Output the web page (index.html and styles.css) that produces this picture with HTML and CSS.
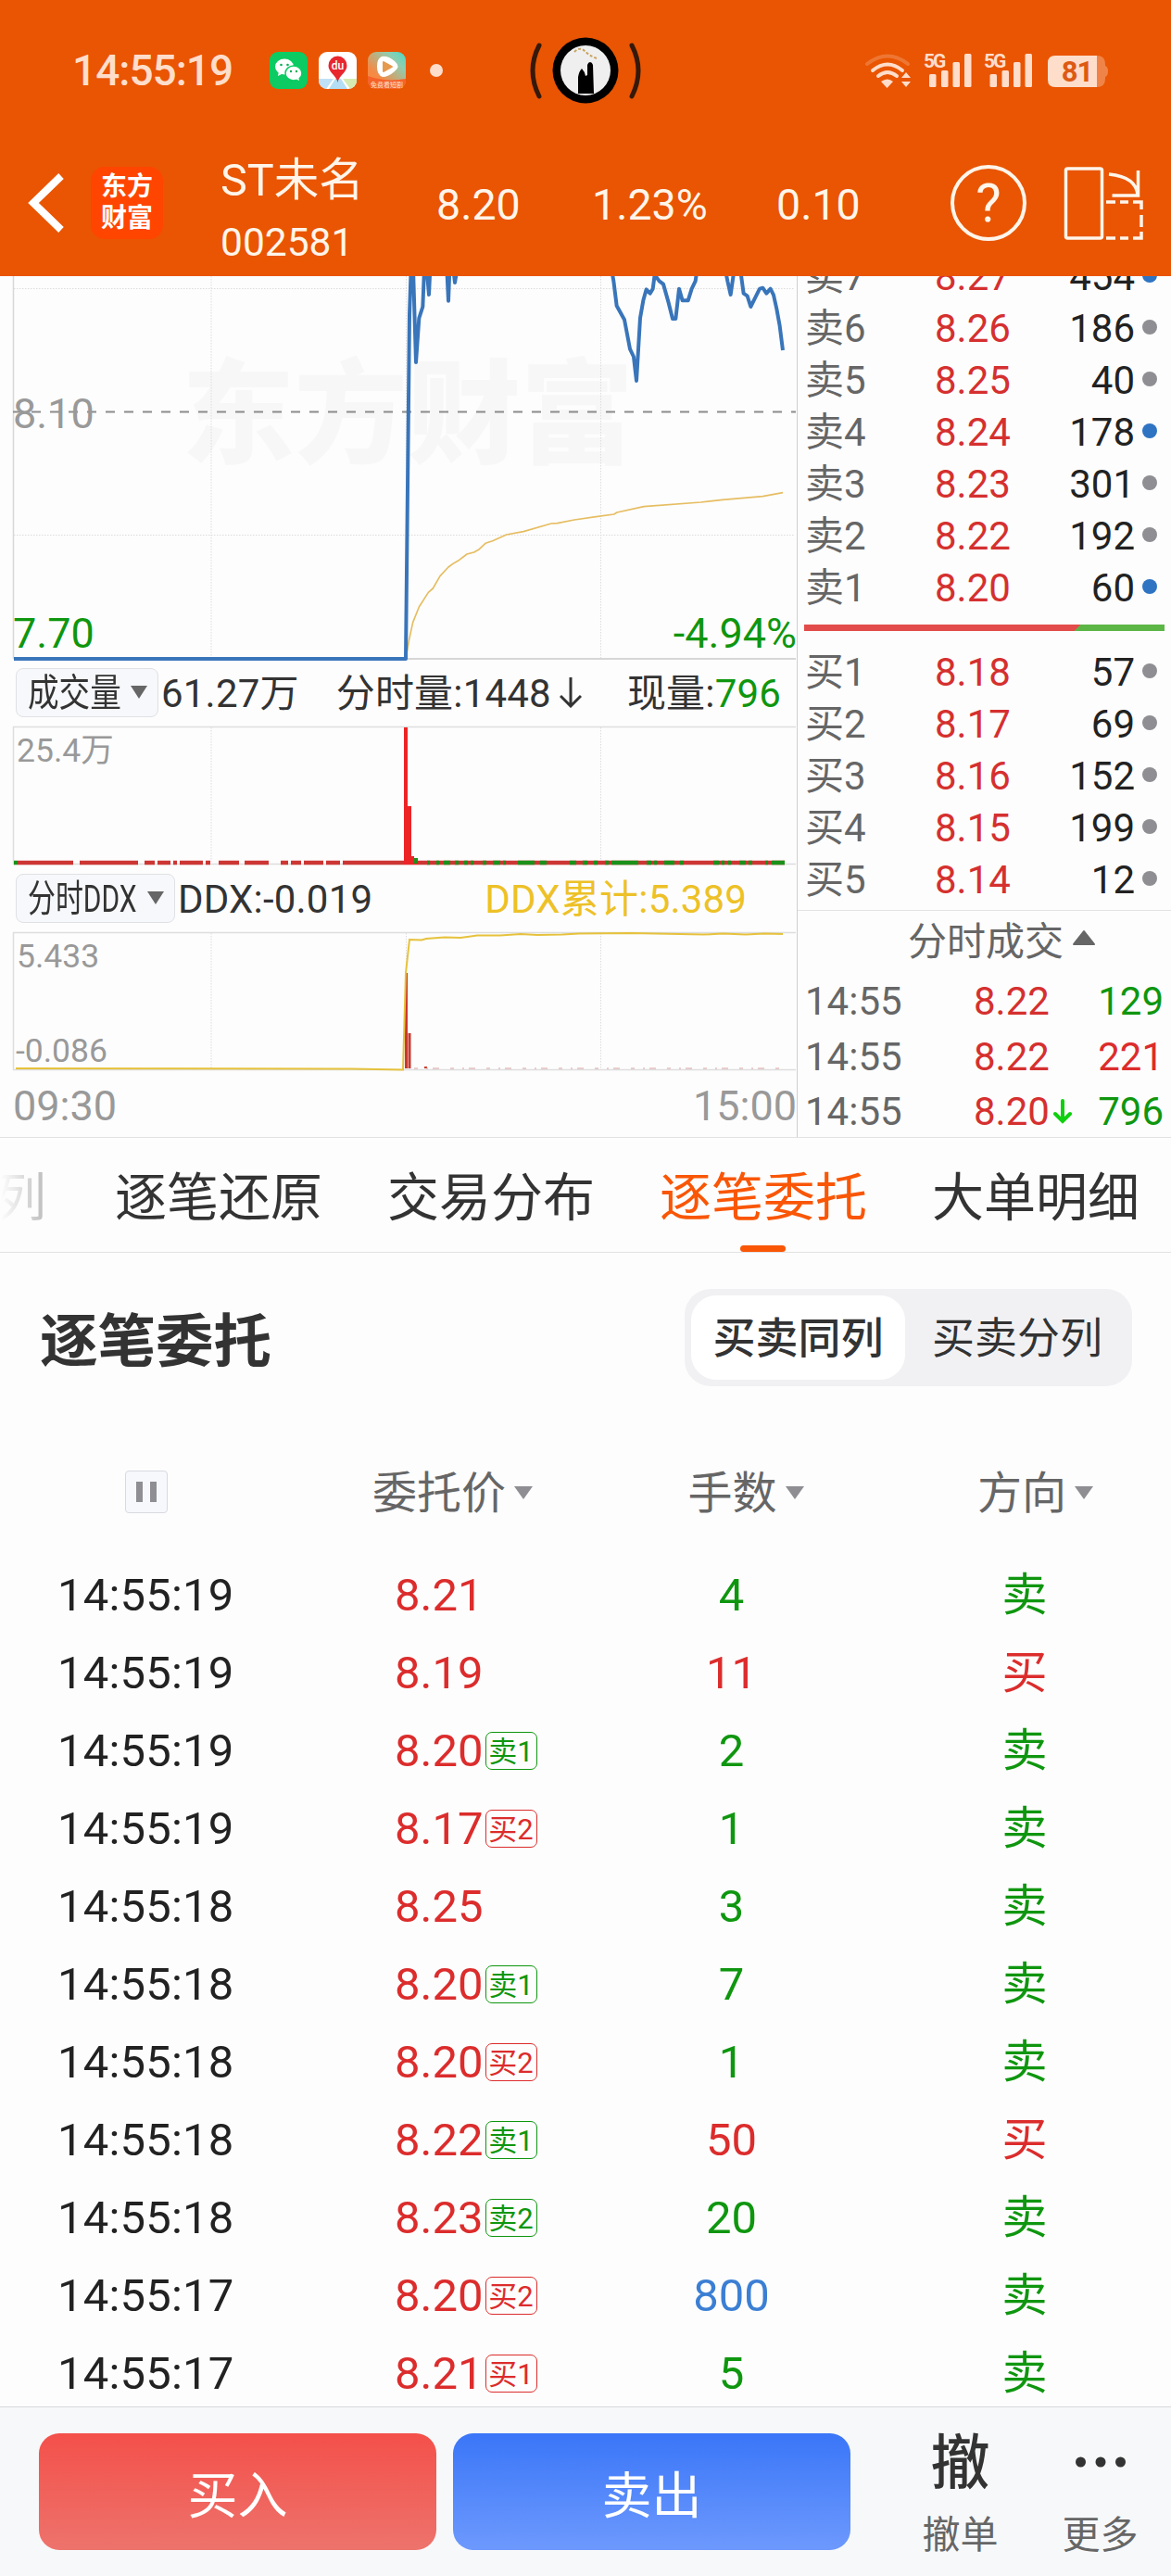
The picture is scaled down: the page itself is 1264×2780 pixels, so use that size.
FILE: index.html
```html
<!DOCTYPE html>
<html lang="zh-CN">
<head>
    <meta charset="UTF-8">
    <meta name="viewport" content="width=device-width, initial-scale=1.0">
    <title>ST未名 002581</title>
    <link rel="stylesheet" href="styles.css">
</head>
<body>
    <header class="top">
        <div class="status">
            <span class="clock">14:55:19</span>
            <svg class="apps" width="190" height="42" viewBox="290 55 190 42">
                <defs>
                    <linearGradient id="video" x1="0" y1="1" x2="1" y2="0">
                        <stop offset="0.3" stop-color="#f58a45"/>
                        <stop offset="0.75" stop-color="#8fcdb0"/>
                        <stop offset="1" stop-color="#45dcc5"/>
                    </linearGradient>
                    <clipPath id="mapClip"><rect x="344" y="56" width="41" height="40" rx="9"/></clipPath>
                    <clipPath id="videoClip"><rect x="397" y="56" width="41" height="40" rx="9"/></clipPath>
                </defs>
                <rect x="291" y="56" width="41" height="40" rx="9" fill="#0bcb62"/>
                <path d="M301 77l-1 5 6-3z" fill="#fff"/>
                <ellipse cx="307" cy="72" rx="10" ry="8.500" fill="#fff"/>
                <ellipse cx="317" cy="79" rx="9" ry="8" fill="#fff" stroke="#0bcb62" stroke-width="1.500"/>
                <path d="M319 85l4 2-1-5z" fill="#fff"/>
                <g fill="#0bae55"><circle cx="303.500" cy="70" r="1.300"/><circle cx="310.500" cy="70" r="1.300"/><circle cx="314" cy="77" r="1.200"/><circle cx="320" cy="77" r="1.200"/></g>
                <g clip-path="url(#mapClip)">
                    <rect x="344" y="56" width="41" height="40" fill="#fff"/>
                    <path d="M344 85h16l-8 11h-8z" fill="#bfe0f7"/>
                    <path d="M362 85h6l7 11h-20z" fill="#b4def5"/>
                    <path d="M370 85h15v11h-7z" fill="#d5ebb2"/>
                </g>
                <path d="M364.500 89c-1-7-10-11-10-18a10 10.500 0 0 1 20 0c0 7-9 11-10 18z" fill="#e8272f"/>
                <text x="364.500" y="75" class="du">du</text>
                <g clip-path="url(#videoClip)">
                    <rect x="397" y="56" width="41" height="40" fill="url(#video)"/>
                    <path d="M397 82q20 7 41 3v12h-41z" fill="#f5622a"/>
                </g>
                <path d="M412 61q-5 2-5 11t6 11q6 0 13-6 7-5 0-11-7-6-14-5z" fill="#fff"/>
                <path d="M414 67v10l9-5z" fill="#e59a4e" stroke="#e59a4e" stroke-width="2" stroke-linejoin="round"/>
                <text x="417.500" y="94" class="app-label">免费看短剧</text>
                <circle cx="471" cy="76" r="7" fill="#ffddcb"/>
            </svg>
            <svg class="island" width="124" height="74" viewBox="570 39 124 74">
                <path d="M582 49q-14 27 0 55M682 49q14 27 0 55" fill="none" stroke="#35190a" stroke-width="5" stroke-linecap="round"/>
                <circle cx="632" cy="76" r="35.500" fill="#000"/>
                <circle cx="632" cy="76" r="27" fill="#efefef"/>
                <path d="M620 56q6-6 11-1t13 8" fill="none" stroke="#c9a25c" stroke-width="2" stroke-dasharray="3 2"/>
                <path d="M624 101v-18q1-6 4-9 3 3 4 8l2-1v-11q1-3 3-3t3 3l1 31z" fill="#000"/>
            </svg>
            <svg class="signals" width="266" height="42" viewBox="932 55 266 42">
                <g fill="none" stroke="#ffddcb" stroke-width="5" stroke-linecap="round">
                    <path d="M936 69q22-17 44 0" opacity="0.25" stroke-width="4"/>
                    <path d="M942 76q16-13 32 0M948 82q10-8 20 0" stroke-width="4"/>
                </g>
                <path d="M951 88q7-5 13 0l-6.500 7z" fill="#ffddcb"/>
                <path d="M973 84l5-6 5 6zM973 88l5 6 5-6z" fill="#ffddcb"/>
                <g fill="#ffddcb">
                    <text x="997" y="73" class="net">5G</text>
                    <rect x="1003" y="80" width="7.500" height="14" rx="1.500"/>
                    <rect x="1016" y="76" width="7.500" height="18" rx="1.500"/>
                    <rect x="1028.500" y="67" width="7.500" height="27" rx="1.500"/>
                    <rect x="1041" y="58" width="7.500" height="36" rx="1.500"/>
                    <text x="1062" y="73" class="net">5G</text>
                    <rect x="1068.500" y="80" width="7.500" height="14" rx="1.500"/>
                    <rect x="1081.500" y="76" width="7.500" height="18" rx="1.500"/>
                    <rect x="1094" y="67" width="7.500" height="27" rx="1.500"/>
                    <rect x="1106.500" y="58" width="7.500" height="36" rx="1.500"/>
                    <path d="M1139 60h45v34h-45q-8 0-8-8v-18q0-8 8-8z"/>
                    <path d="M1184 60q9 0 9 9v2q3 1 3 6t-3 6v2q0 9-9 9z" opacity="0.35"/>
                </g>
                <text x="1162.500" y="88" class="battery">81</text>
            </svg>
        </div>
        <div class="nav">
            <svg class="back" width="44" height="70" viewBox="0 0 44 70"><path d="M38 6L8 35l30 29" fill="none" stroke="#fff" stroke-width="8"/></svg>
            <div class="logo"><span>东方</span><span>财富</span></div>
            <div class="stock">
                <span class="stock-name">ST未名</span>
                <span class="stock-code">002581</span>
            </div>
            <span class="quote q-price">8.20</span>
            <span class="quote q-rate">1.23%</span>
            <span class="quote q-diff">0.10</span>
            <div class="help">?</div>
            <svg class="rotate" width="88" height="82" viewBox="1148 177 88 82" fill="none" stroke="#fff5ea" stroke-width="3.500">
                <rect x="1151.500" y="181" width="39" height="75" rx="2"/>
                <path d="M1198 187q30 3 31 23M1229.500 183v27h-28"/>
                <path d="M1195 217h10m5 0h9m5 0h9v8m0 6v13m0 5v7h-9m-5 0h-9m-5 0h-10"/>
            </svg>
        </div>
    </header>

    <section class="market">
        <div class="charts">
            <svg class="chart" width="860" height="417" viewBox="0 298 860 417">
                <text x="196" y="490" class="watermark">东方财富</text>
                <g class="grid">
                    <path d="M15 311.500H858M15 577.500H858M228 298V710M438.500 298V710M648.500 298V710"/>
                </g>
                <path d="M14.500 298V711" stroke="#d8d8d8" stroke-width="1.500"/>
                <path d="M438 711H859" stroke="#d6d6d6" stroke-width="2"/>
                <path d="M14 444.500H859" stroke="#8c8c8c" stroke-width="2" stroke-dasharray="10 10"/>
                <text x="14" y="462" class="axis">8.10</text>
                <text x="14" y="699" class="axis down">7.70</text>
                <text x="860" y="699" class="axis down end">-4.94%</text>
                <!-- average price and price, drawn on a 3x scale -->
                <g transform="translate(430 290) scale(0.33333)" fill="none" stroke-linejoin="round">
                    <path stroke="#e6bd62" stroke-width="5" d="M28 1240L35 1200 47 1145 67 1095 97 1048 112 1035 135 995 162 966 180 953 193 946 222 924 245 918 262 908 282 889 305 881 350 861 405 851 495 825 515 824 570 813 640 803 698 795 708 789 795 770 980 756 1050 748 1180 737 1245 725"/>
                    <g stroke="#3975ba" stroke-width="12">
                        <path d="M-1245 1263H24L36 150 41 0H48L57 303 67 160 79 123 84 0H92L99 84 103 0M157 0L162 104 166 0M178 0L183 45 189 10"/>
                        <path d="M690 0L697 40 707 120 732 165 750 260 762 285 771 363 783 160 793 103 803 67 815 80 824 65 830 20 845 40 858 50 875 110 888 162 898 162 909 65 920 103 938 103 950 65 962 40 968 0M1058 0L1066 40 1076 84 1088 0M1107 0L1118 80 1130 88 1141 123 1155 95 1170 65 1180 62 1192 80 1205 65 1215 85 1225 130 1235 185 1245 264"/>
                    </g>
                </g>
            </svg>

            <div class="info">
                <button class="picker"><span class="picker-text vol">成交量</span><i class="caret"></i></button>
                <span class="total">61.27万</span>
                <span class="minute">分时量:1448</span>
                <svg class="arrow" width="24" height="34" viewBox="0 0 24 34"><path d="M12 1v30M1 21l11 11 11-11" fill="none" stroke="#333" stroke-width="3"/></svg>
                <span class="now">现量:<b>796</b></span>
            </div>

            <svg class="chart" width="860" height="158" viewBox="0 779 860 158">
                <path class="frame" d="M859 784.500H14.500V932.500H859"/>
                <path class="grid" d="M228 785V932M648.500 785V932"/>
                <text x="18" y="822" class="mark">25.4万</text>
                <g fill="none" stroke-width="4.500">
                    <path stroke="#cc3634" d="M19 931H79M86 931H149M156 931H167M170 931H184M187 931H191M194 931H219M222 931H227M236 931H258M264 931H290M303 931H311M314 931H325M328 931H349M352 931H367M370 931H847"/>
                    <path stroke="#1b9119" d="M15 931H19M461 931H464M471 931H474M479 931H486M491 931H495M501 931H505M508 931H511M521 931H525M532 931H540M543 931H546M559 931H577M583 931H590M615 931H622M629 931H634M641 931H645M653 931H657M660 931H689M698 931H703M706 931H709M717 931H728M734 931H738M770 931H776M779 931H782M786 931H789M798 931H805M808 931H812M826 931H829M833 931H847"/>
                </g>
                <path d="M436 785h4v85h4v54h3v6h5v3h-16z" fill="#ec2426"/>
                <path d="M447 926h4v6h-4z" fill="#1b9119"/>
            </svg>

            <div class="info">
                <button class="picker"><span class="picker-text ddx">分时DDX</span><i class="caret"></i></button>
                <span class="total">DDX:-0.019</span>
                <span class="sum">DDX累计:5.389</span>
            </div>

            <svg class="chart" width="860" height="159" viewBox="0 1001 860 159">
                <path class="frame" d="M859 1006.500H14.500V1154.500H859"/>
                <path class="grid" d="M228 1007V1154M438.500 1007V1154M648.500 1007V1154"/>
                <text x="18" y="1044" class="mark">5.433</text>
                <text x="17" y="1146" class="mark">-0.086</text>
                <path d="M437 1050h3v103h-3zM440.500 1115h3v38h-3zM458 1151h3v2h-3z" fill="#c93a30"/>
                <path d="M447 1153H846" stroke="#d9a0a0" stroke-dasharray="4 9 2 5 7 12"/>
                <path d="M17 1153L380 1153.500 435 1154.500 438 1050 442 1014 455 1014.500 460 1013 480 1011.500 497 1012 515 1009.500 540 1009.500 562 1008 580 1009 607 1008.500 625 1007.500 680 1007 760 1008.500 780 1007.500 805 1008.500 825 1007.500 845 1008" fill="none" stroke="#e6c23c" stroke-width="2"/>
            </svg>

            <div class="times"><span>09:30</span><span>15:00</span></div>
        </div>

        <div class="book">
            <div class="level"><span>卖7</span><em>8.27</em><span class="qty">454</span><i class="dot blue"></i></div>
            <div class="level"><span>卖6</span><em>8.26</em><span class="qty">186</span><i class="dot"></i></div>
            <div class="level"><span>卖5</span><em>8.25</em><span class="qty">40</span><i class="dot"></i></div>
            <div class="level"><span>卖4</span><em>8.24</em><span class="qty">178</span><i class="dot blue"></i></div>
            <div class="level"><span>卖3</span><em>8.23</em><span class="qty">301</span><i class="dot"></i></div>
            <div class="level"><span>卖2</span><em>8.22</em><span class="qty">192</span><i class="dot"></i></div>
            <div class="level"><span>卖1</span><em>8.20</em><span class="qty">60</span><i class="dot blue"></i></div>
            <div class="ratio"></div>
            <div class="level"><span>买1</span><em>8.18</em><span class="qty">57</span><i class="dot"></i></div>
            <div class="level"><span>买2</span><em>8.17</em><span class="qty">69</span><i class="dot"></i></div>
            <div class="level"><span>买3</span><em>8.16</em><span class="qty">152</span><i class="dot"></i></div>
            <div class="level"><span>买4</span><em>8.15</em><span class="qty">199</span><i class="dot"></i></div>
            <div class="level"><span>买5</span><em>8.14</em><span class="qty">12</span><i class="dot"></i></div>
            <div class="ticks-title">分时成交<svg width="26" height="18" viewBox="0 0 26 18"><path d="M13 2L24 16H2z" fill="#666" stroke="#666" stroke-width="2" stroke-linejoin="round"/></svg></div>
            <div class="tick"><span>14:55</span><em>8.22</em><span class="down">129</span></div>
            <div class="tick"><span>14:55</span><em>8.22</em><span class="up">221</span></div>
            <div class="tick"><span>14:55</span><em>8.20<svg width="20" height="28" viewBox="0 0 20 28"><path d="M10 2v22M2 16l8 8 8-8" fill="none" stroke="#0fd00f" stroke-width="4" stroke-linecap="round"/></svg></em><span class="down">796</span></div>
        </div>
    </section>

    <nav class="tabs">
        <span class="tab cut">列</span>
        <span class="tab">逐笔还原</span>
        <span class="tab">交易分布</span>
        <span class="tab active">逐笔委托</span>
        <span class="tab">大单明细</span>
    </nav>

    <section class="orders">
        <div class="orders-head">
            <h1>逐笔委托</h1>
            <div class="switch">
                <span class="on">买卖同列</span>
                <span>买卖分列</span>
            </div>
        </div>
        <div class="row head">
            <span class="c1"><i class="pause"></i></span>
            <span class="c2">委托价<i class="sort"></i></span>
            <span class="c3">手数<i class="sort"></i></span>
            <span class="c4">方向<i class="sort"></i></span>
        </div>
        <div class="row"><span class="c1">14:55:19</span><span class="c2">8.21</span><span class="c3 down">4</span><span class="c4 down">卖</span></div>
        <div class="row"><span class="c1">14:55:19</span><span class="c2">8.19</span><span class="c3 up">11</span><span class="c4 up">买</span></div>
        <div class="row"><span class="c1">14:55:19</span><span class="c2">8.20<i class="chip down">卖1</i></span><span class="c3 down">2</span><span class="c4 down">卖</span></div>
        <div class="row"><span class="c1">14:55:19</span><span class="c2">8.17<i class="chip up">买2</i></span><span class="c3 down">1</span><span class="c4 down">卖</span></div>
        <div class="row"><span class="c1">14:55:18</span><span class="c2">8.25</span><span class="c3 down">3</span><span class="c4 down">卖</span></div>
        <div class="row"><span class="c1">14:55:18</span><span class="c2">8.20<i class="chip down">卖1</i></span><span class="c3 down">7</span><span class="c4 down">卖</span></div>
        <div class="row"><span class="c1">14:55:18</span><span class="c2">8.20<i class="chip up">买2</i></span><span class="c3 down">1</span><span class="c4 down">卖</span></div>
        <div class="row"><span class="c1">14:55:18</span><span class="c2">8.22<i class="chip down">卖1</i></span><span class="c3 up">50</span><span class="c4 up">买</span></div>
        <div class="row"><span class="c1">14:55:18</span><span class="c2">8.23<i class="chip down">卖2</i></span><span class="c3 down">20</span><span class="c4 down">卖</span></div>
        <div class="row"><span class="c1">14:55:17</span><span class="c2">8.20<i class="chip up">买2</i></span><span class="c3 big">800</span><span class="c4 down">卖</span></div>
        <div class="row"><span class="c1">14:55:17</span><span class="c2">8.21<i class="chip up">买1</i></span><span class="c3 down">5</span><span class="c4 down">卖</span></div>
    </section>

    <footer class="trade">
        <button class="buy">买入</button>
        <button class="sell">卖出</button>
        <div class="tool"><span class="tool-icon">撤</span><span>撤单</span></div>
        <div class="tool"><span class="tool-icon"><svg width="56" height="12" viewBox="0 0 56 12" fill="#333"><circle cx="6.500" cy="6" r="5.500"/><circle cx="28" cy="6" r="5.500"/><circle cx="49.500" cy="6" r="5.500"/></svg></span><span>更多</span></div>
    </footer>
</body>
</html>
```
FILE: styles.css
```css
* {
    box-sizing: border-box;
}
body {
    margin: 0;
    width: 1264px;
    height: 2780px;
    overflow: hidden;
    display: flex;
    flex-direction: column;
    background: #fdfdfd;
    color: #333;
    font-family: Roboto, "Noto Sans CJK SC", sans-serif;
}
svg {
    display: block;
    flex: none;
}
em, i {
    font-style: normal;
}
button {
    border: none;
    font-family: inherit;
}
.up {
    color: #dc2c2c;
}
.down {
    color: #0f960f;
}
.big {
    color: #3b7fd4;
}

/* header */
.top {
    height: 298px;
    flex: none;
    background: #e95502;
    color: #fff5ea;
}
.status {
    height: 152px;
    display: flex;
    align-items: center;
    padding-left: 78px;
}
.clock {
    width: 212px;
    font-size: 46px;
    font-weight: 500;
    line-height: 50px;
    color: #ffddcb;
    letter-spacing: -1px;
}
.island {
    margin-left: 90px;
}
.signals {
    margin-left: 238px;
}
.du {
    font-size: 12px;
    font-weight: 500;
    fill: #fff;
    text-anchor: middle;
}
.app-label {
    font-size: 7px;
    fill: #ffe3cf;
    text-anchor: middle;
}
.net {
    font-size: 21px;
    font-weight: 700;
    letter-spacing: -2px;
}
.battery {
    font-size: 31px;
    font-weight: 700;
    fill: #dc5a14;
    text-anchor: middle;
    letter-spacing: -1px;
}
.nav {
    height: 134px;
    display: flex;
    align-items: center;
    padding-left: 28px;
}
.logo {
    width: 78px;
    height: 78px;
    margin-left: 26px;
    padding-top: 5px;
    border-radius: 15px;
    background: #ff4500;
    color: #fff;
    font-size: 28px;
    font-weight: 700;
    line-height: 34px;
    text-align: center;
}
.logo span {
    display: block;
}
.stock {
    width: 233px;
    margin-left: 62px;
    padding-top: 15px;
}
.stock span {
    display: block;
}
.stock-name {
    font-size: 48.500px;
    line-height: 70px;
}
.stock-code {
    font-size: 42.500px;
    line-height: 64px;
}
.quote {
    padding-top: 4px;
    font-size: 46.500px;
}
.q-price {
    width: 168px;
}
.q-rate {
    width: 199px;
}
.q-diff {
    width: 188px;
}
.help {
    width: 82px;
    height: 82px;
    border: 4px solid #fff5ea;
    border-radius: 50%;
    font-size: 58px;
    line-height: 75px;
    text-align: center;
}
.rotate {
    margin-left: 39px;
}

/* charts */
.market {
    height: 930px;
    flex: none;
    display: flex;
    border-bottom: 1px solid #e2e2e2;
    overflow: hidden;
}
.charts {
    width: 860px;
}
.grid {
    fill: none;
    stroke: #dcdcdc;
    stroke-dasharray: 1.500 1.500;
}
.frame {
    fill: none;
    stroke: #dedede;
    stroke-width: 1.500;
}
.watermark {
    font-size: 122px;
    font-weight: 900;
    fill: #f7f7f7;
}
.axis {
    font-size: 45px;
    fill: #999;
}
.axis.down {
    fill: #0f960f;
}
.end {
    text-anchor: end;
}
.mark {
    font-size: 35.500px;
    fill: #999;
}
.info {
    height: 64px;
    display: flex;
    align-items: center;
    padding-left: 17px;
    font-size: 42px;
    line-height: 64px;
    white-space: nowrap;
}
.info > span {
    padding-top: 3px;
}
.picker {
    height: 53px;
    display: flex;
    align-items: center;
    margin-right: 3px;
    padding: 0 11px 0 12px;
    border: 1px solid #e0e1e4;
    border-radius: 8px;
    background: #f7f8fb;
    color: #333;
    font-size: 41px;
    line-height: 50px;
}
.picker-text {
    padding-top: 2px;
    transform: scaleX(0.82);
    transform-origin: left;
}
.vol {
    width: 111px;
}
.ddx {
    width: 129px;
    transform: scaleX(0.73);
}
.caret {
    border: 9px solid transparent;
    border-top: 14px solid #666;
    border-bottom: 0;
}
.total {
    letter-spacing: 0.200px;
}
.minute {
    margin-left: 40px;
    letter-spacing: 0.200px;
}
.arrow {
    margin-left: 9px;
}
.now {
    margin-left: 49px;
    letter-spacing: 0.200px;
}
.now b {
    font-weight: 400;
    color: #0f960f;
}
.sum {
    margin-left: 121px;
    letter-spacing: 0.200px;
    color: #edc127;
}
.times {
    height: 67px;
    display: flex;
    justify-content: space-between;
    padding: 0 0 0 14px;
    font-size: 45px;
    line-height: 67px;
    color: #999;
}

/* order book */
.book {
    width: 404px;
    border-left: 1px solid #cfcfcf;
    font-size: 42px;
}
.level {
    height: 56px;
    display: grid;
    grid-template-columns: 139px 1fr auto 16px;
    align-items: center;
    padding: 0 15px 0 8px;
    line-height: 58px;
    color: #666;
}
.level:first-child {
    margin-top: -28px;
}
.level em, .tick em {
    color: #d5302f;
}
.level em {
    padding-left: 1px;
}
.qty {
    padding-right: 8px;
    color: #222;
}
.dot {
    width: 16px;
    height: 16px;
    margin-top: -4px;
    border-radius: 50%;
    background: #8e8e93;
}
.dot.blue {
    background: #2f74c3;
}
.ratio {
    height: 7px;
    margin: 12px 7px 16px;
    background: linear-gradient(135deg, #e24c4a 75.500%, #5cb646 75.500%);
}
.ticks-title {
    height: 69px;
    display: flex;
    align-items: center;
    margin-top: 5px;
    padding-left: 119px;
    border-top: 1px solid #e2e2e2;
    line-height: 70px;
    color: #666;
}
.ticks-title svg {
    margin: -10px 0 0 9px;
}
.tick {
    height: 59.500px;
    display: grid;
    grid-template-columns: 182px 1fr auto;
    padding: 0 8px 0 8px;
    line-height: 59px;
    color: #666;
}
.tick em {
    display: flex;
    align-items: center;
}
.tick svg {
    margin-left: 4px;
}
.tick .up {
    color: #dc2c2c;
}
.tick .down {
    color: #0f960f;
}

/* tabs */
.tabs {
    height: 124px;
    flex: none;
    display: flex;
    gap: 70px;
    margin-left: -6px;
    border-bottom: 1px solid #e2e2e2;
    font-size: 56px;
    line-height: 130px;
    white-space: nowrap;
}
.tab {
    position: relative;
}
.cut {
    width: 56px;
    margin-right: 4px;
    background: linear-gradient(90deg, #fff 10%, #bbb);
    -webkit-background-clip: text;
    background-clip: text;
    color: transparent;
}
.active {
    color: #f95606;
}
.active::after {
    content: "";
    position: absolute;
    left: 87px;
    bottom: 0;
    width: 49px;
    height: 7px;
    border-radius: 4px;
    background: #f95606;
}

/* order list */
.orders {
    flex: 1;
    overflow: hidden;
}
.orders-head {
    height: 186px;
    display: flex;
    align-items: center;
    justify-content: space-between;
    padding: 0 42px 0 43px;
}
h1 {
    margin: 0 0 5px;
    font-size: 62.500px;
    font-weight: 700;
}
.switch {
    width: 483px;
    height: 105px;
    display: flex;
    margin-bottom: 3px;
    padding: 7px;
    border-radius: 28px;
    background: #f1f1f4;
    font-size: 46px;
    line-height: 93px;
    text-align: center;
}
.switch span {
    flex: 1;
    padding-left: 4px;
    border-radius: 27px;
}
.switch .on {
    flex: none;
    width: 231px;
    padding-left: 0;
    background: #fff;
    font-weight: 500;
}
.row {
    height: 84px;
    display: grid;
    grid-template-columns: 426px 239px 249px 1fr;
    font-size: 49px;
    line-height: 85px;
    color: #222;
}
.head {
    height: 141px;
    font-size: 48px;
    line-height: 148px;
    color: #666;
}
.c1 {
    padding-left: 62px;
    letter-spacing: 0.200px;
}
.c2, .c3, .c4, .head span {
    display: flex;
    align-items: center;
}
.c2 {
    color: #dc2c2c;
}
.c3 {
    justify-content: center;
}
.c4 {
    justify-content: center;
    padding-left: 34px;
}
.head .c1 {
    padding-left: 135px;
}
.head .c2 {
    margin-left: -24px;
    color: #666;
}
.head .c3 {
    padding-left: 31px;
}
.head .c4 {
    padding-left: 57px;
}
.pause {
    width: 46px;
    height: 46px;
    margin-top: -4px;
    border: 1px solid #d9dae0;
    border-radius: 4px;
    background: linear-gradient(#8e8e93, #8e8e93) 11px 11px / 7px 22px no-repeat,
        linear-gradient(#8e8e93, #8e8e93) 26px 11px / 7px 22px no-repeat, #f7f8fb;
}
.sort {
    margin: -2px 0 0 9px;
    border: 10.500px solid transparent;
    border-top: 14px solid #8e8e93;
    border-bottom: 0;
}
.chip {
    width: 56px;
    height: 41px;
    margin-left: 2px;
    border: 1px solid;
    border-radius: 7px;
    font-size: 31px;
    line-height: 41px;
    text-align: center;
}

/* bottom bar */
.trade {
    height: 183px;
    flex: none;
    display: flex;
    align-items: flex-start;
    padding: 28px 0 0 42px;
    border-top: 1px solid #d6d8da;
    background: #f7f8fa;
}
.trade button {
    width: 429px;
    height: 126px;
    margin-right: 18px;
    padding: 4px 0 0;
    border-radius: 22px;
    color: #fff;
    font-size: 54px;
    line-height: 130px;
}
.trade .buy {
    background: linear-gradient(#f4504a, #ed736c);
}
.trade .sell {
    background: linear-gradient(#3a76f8, #6d99fd);
}
.tool {
    width: 151px;
    display: flex;
    flex-direction: column;
    align-items: center;
    color: #666;
    font-size: 41px;
    line-height: 60px;
}
.tool:nth-child(3) {
    margin-left: 25px;
}
.tool-icon {
    height: 80px;
    color: #333;
    font-size: 64px;
    font-weight: 500;
    line-height: 66px;
}
.tool-icon svg {
    margin-top: 25px;
}
```
